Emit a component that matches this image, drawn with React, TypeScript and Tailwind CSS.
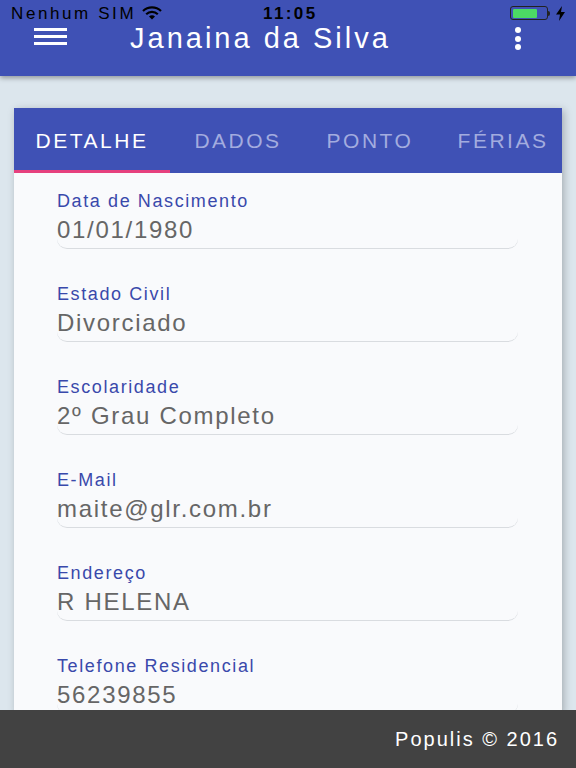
// App.tsx
// Employee detail screen (Populis) – status bar, app bar, tabbed card, footer

const fields = [
  { label: "Data de Nascimento", value: "01/01/1980" },
  { label: "Estado Civil", value: "Divorciado" },
  { label: "Escolaridade", value: "2º Grau Completo" },
  { label: "E-Mail", value: "maite@glr.com.br" },
  { label: "Endereço", value: "R HELENA" },
  { label: "Telefone Residencial", value: "56239855" },
];

const tabs = [
  { name: "DETALHE", w: "w-[156px]", active: true },
  { name: "DADOS", w: "w-[136px]", active: false },
  { name: "PONTO", w: "w-[128px]", active: false },
  { name: "FÉRIAS", w: "w-[138px]", active: false },
];

function StatusBar() {
  return (
    <div className="h-[26px] flex items-center px-[11px] text-black text-[17px] tracking-[2.6px] leading-none relative">
      <span>Nenhum SIM</span>
      {/* wifi */}
      <svg width="20" height="14" viewBox="0 0 20 14" className="ml-[6px]">
        <path d="M1 5 A13 13 0 0 1 19 5" stroke="black" strokeWidth="2.2" fill="none" />
        <path d="M4.2 8.2 A8.5 8.5 0 0 1 15.8 8.2" stroke="black" strokeWidth="2.2" fill="none" />
        <path d="M10 13.5 L7 10.6 A4.2 4.2 0 0 1 13 10.6 Z" fill="black" />
      </svg>
      <span className="absolute left-[263px] font-semibold tracking-[2.4px]">11:05</span>
      <div className="ml-auto flex items-center gap-[6px]">
        <div className="flex items-center">
          <div className="w-[38px] h-[14px] rounded-[3px] border border-[#222] p-[1.5px]">
            <div className="w-[24px] h-full bg-[#4cd964] rounded-[1px]" />
          </div>
          <div className="w-[2px] h-[5px] bg-[#222] rounded-r-sm" />
        </div>
        <svg width="9" height="15" viewBox="0 0 9 15">
          <path d="M6 0 L0 8.5 H4 L3 15 L9 6 H5 Z" fill="black" />
        </svg>
      </div>
    </div>
  );
}

function AppBar() {
  return (
    <div className="h-[50px] flex items-start relative">
      <div className="ml-[34px] mt-[2px] flex flex-col gap-[4px]">
        <div className="w-[33px] h-[3px] bg-white" />
        <div className="w-[33px] h-[3px] bg-white" />
        <div className="w-[33px] h-[3px] bg-white" />
      </div>
      <span className="ml-[63px] -mt-[5px] text-white text-[29px] leading-[34px] tracking-[3px]">
        Janaina da Silva
      </span>
      <div className="ml-auto mr-[55px] mt-[1px] flex flex-col gap-[2.5px]">
        <div className="w-[6px] h-[6px] rounded-full bg-white" />
        <div className="w-[6px] h-[6px] rounded-full bg-white" />
        <div className="w-[6px] h-[6px] rounded-full bg-white" />
      </div>
    </div>
  );
}

function Field({ label, value }: { label: string; value: string }) {
  return (
    <div className="mb-[35px]">
      <p className="text-[18px] leading-[20px] text-[#3949ab] tracking-[1.6px]">{label}</p>
      <div className="mt-[5px] pb-[4px] border-b border-[#d9dce0] rounded-b-[10px]">
        <p className="text-[24px] leading-[28px] text-[#666666] tracking-[1.7px]">{value}</p>
      </div>
    </div>
  );
}

export default function App() {
  return (
    <div
      className="w-[576px] h-[768px] flex flex-col overflow-hidden bg-[#dbe5ec]"
      style={{ fontFamily: '"Liberation Sans", Arial, sans-serif' }}
    >
      {/* Header */}
      <div className="h-[76px] shrink-0 bg-[#3f51b5] shadow-[0_2px_5px_rgba(0,0,0,0.35)] relative z-10">
        <StatusBar />
        <AppBar />
      </div>

      {/* Content */}
      <div className="flex-1 overflow-hidden pt-[32px] px-[14px] bg-[#dce6ed]">
        <div className="w-[548px] bg-[#f9fafc] shadow-[2px_2px_8px_rgba(0,0,0,0.25)]">
          {/* Tabs */}
          <div className="h-[65px] bg-[#3f51b5] flex overflow-hidden">
            {tabs.map((t) => (
              <div
                key={t.name}
                className={`${t.w} shrink-0 flex flex-col items-center justify-center relative`}
              >
                <span
                  className={`text-[21px] tracking-[2.5px] ${t.active ? "text-white" : "text-[#a3acdf]"}`}
                >
                  {t.name}
                </span>
                {t.active && <div className="absolute bottom-0 left-0 right-0 h-[3px] bg-[#e6407e]" />}
              </div>
            ))}
          </div>

          {/* Fields */}
          <div className="pt-[18px] pl-[43px] pr-[44px]">
            {fields.map((f) => (
              <Field key={f.label} label={f.label} value={f.value} />
            ))}
          </div>
        </div>
      </div>

      {/* Footer */}
      <div className="h-[58px] shrink-0 bg-[#424242] flex items-center justify-end pr-[17px] relative z-10">
        <span className="text-white text-[20px] tracking-[2px]">Populis © 2016</span>
      </div>
    </div>
  );
}
